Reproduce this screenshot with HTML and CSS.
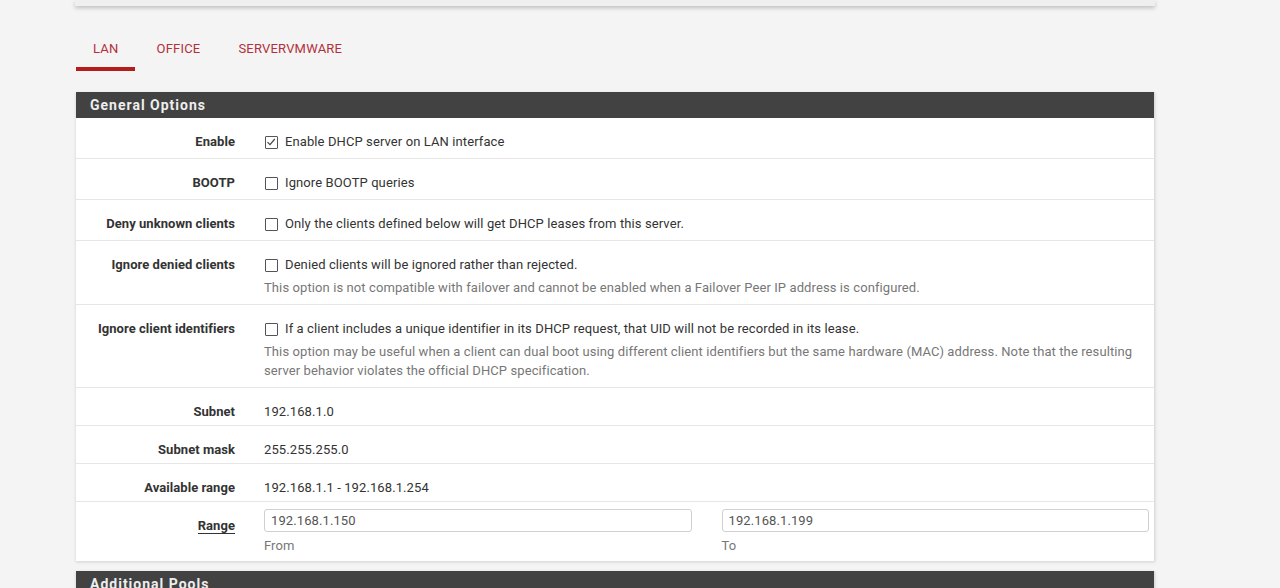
FILE: index.html
```html
<!DOCTYPE html>
<html>
<head>
<meta charset="utf-8">
<link rel="stylesheet" href="styles.css">
</head>
<body>
<div class="page">
  <div class="topcard"></div>
  <nav class="tabs">
    <a class="tab active">LAN</a>
    <a class="tab">OFFICE</a>
    <a class="tab">SERVERVMWARE</a>
  </nav>
  <section class="panel">
    <h2 class="panel-heading">General Options</h2>
    <div class="panel-body">
      <div class="row">
        <div class="label">Enable</div>
        <div class="content"><label class="check"><span class="box checked"><svg viewBox="0 0 12 12" width="12" height="12"><path d="M2.5 6.2 L5 8.7 L9.8 3" fill="none" stroke="#444" stroke-width="1.2"/></svg></span>Enable DHCP server on LAN interface</label></div>
      </div>
      <div class="row">
        <div class="label">BOOTP</div>
        <div class="content"><label class="check"><span class="box"></span>Ignore BOOTP queries</label></div>
      </div>
      <div class="row">
        <div class="label">Deny unknown clients</div>
        <div class="content"><label class="check"><span class="box"></span>Only the clients defined below will get DHCP leases from this server.</label></div>
      </div>
      <div class="row">
        <div class="label">Ignore denied clients</div>
        <div class="content"><label class="check"><span class="box"></span>Denied clients will be ignored rather than rejected.</label>
          <p class="help">This option is not compatible with failover and cannot be enabled when a Failover Peer IP address is configured.</p></div>
      </div>
      <div class="row">
        <div class="label">Ignore client identifiers</div>
        <div class="content"><label class="check"><span class="box"></span>If a client includes a unique identifier in its DHCP request, that UID will not be recorded in its lease.</label>
          <p class="help">This option may be useful when a client can dual boot using different client identifiers but the same hardware (MAC) address. Note that the resulting server behavior violates the official DHCP specification.</p></div>
      </div>
      <div class="row static">
        <div class="label">Subnet</div>
        <div class="content">192.168.1.0</div>
      </div>
      <div class="row static">
        <div class="label">Subnet mask</div>
        <div class="content">255.255.255.0</div>
      </div>
      <div class="row static">
        <div class="label">Available range</div>
        <div class="content">192.168.1.1 - 192.168.1.254</div>
      </div>
      <div class="row range">
        <div class="label"><span class="req">Range</span></div>
        <div class="content pair">
          <div class="field"><input class="input" type="text" value="192.168.1.150"><p class="help">From</p></div>
          <div class="field"><input class="input" type="text" value="192.168.1.199"><p class="help">To</p></div>
        </div>
      </div>
    </div>
  </section>
  <section class="panel">
    <h2 class="panel-heading">Additional Pools</h2>
  </section>
</div>
</body>
</html>
```
FILE: styles.css
```css
html, body {
  margin: 0;
  padding: 0;
  background: #f4f4f4;
  font-family: Roboto, "Liberation Sans", Arial, sans-serif;
  color: #333;
  overflow: hidden;
  height: 588px;
}
.page {
  width: 1079px;
  margin-left: 76px;
}
.topcard {
  height: 6px;
  background: #efefef;
  box-shadow: 0 2px 4px rgba(0,0,0,0.22);
  margin: 0 0 0 -1px;
}
.tabs {
  display: flex;
  margin-top: 35px;
  height: 30px;
  align-items: flex-start;
}
.tab {
  display: block;
  font-size: 13px;
  letter-spacing: 0.2px;
  color: #b3303a;
  text-transform: uppercase;
  padding: 0 17px;
  line-height: 16px;
  height: 26px;
  margin-right: 4px;
}
.tab.active {
  border-bottom: 4px solid #b71c1c;
}
.panel {
  margin-top: 21px;
  background: #fff;
  box-shadow: 0 1px 3px rgba(0,0,0,0.15);
  border-right: 1px solid #ddd;
}
.panel + .panel {
  margin-top: 10px;
}
.panel-heading {
  margin: 0;
  height: 26px;
  line-height: 27px;
  background: #424242;
  color: #eeeeee;
  font-size: 14px;
  font-weight: 700;
  letter-spacing: 1px;
  padding-left: 14px;
}
.row {
  display: grid;
  grid-template-columns: 159px 1fr;
  column-gap: 29px;
  padding: 15px 5px 7px 0;
  border-bottom: 1px solid #e6e6e6;
  font-size: 13px;
  letter-spacing: 0.1px;
}
.row:last-child {
  border-bottom: none;
}
.row.static {
  padding-bottom: 4px;
}
.label {
  text-align: right;
  font-weight: 700;
  font-size: 13px;
  letter-spacing: 0.05px;
  line-height: 18px;
  color: #333;
}
.content {
  line-height: 18px;
  color: #333;
}
.check {
  display: flex;
  align-items: center;
}
.box {
  display: inline-block;
  width: 11px;
  height: 11px;
  border: 1px solid #555;
  border-radius: 1px;
  margin: 0 7px 0 1px;
  box-sizing: content-box;
  position: relative;
  top: 0;
}
.box svg {
  display: block;
  margin: -1px 0 0 -1px;
}
.help {
  margin: 4px 0 0 0;
  color: #777;
  font-size: 13px;
  line-height: 19px;
}
.row.range {
  padding-top: 7px;
  padding-bottom: 6px;
}
.row.range .label {
  padding-top: 8px;
}
.req {
  border-bottom: 1.5px solid #333;
}
.pair {
  display: grid;
  grid-template-columns: 1fr 1fr;
  column-gap: 30px;
}
.input {
  display: block;
  width: 100%;
  box-sizing: border-box;
  height: 23px;
  border: 1px solid #d0d0d0;
  border-radius: 3px;
  padding: 0 6px;
  font-family: Roboto, "Liberation Sans", Arial, sans-serif;
  font-size: 13px;
  letter-spacing: 0.1px;
  color: #555;
  background: #fff;
  margin: 0;
}
.field .help {
  margin-top: 4px;
}
```
